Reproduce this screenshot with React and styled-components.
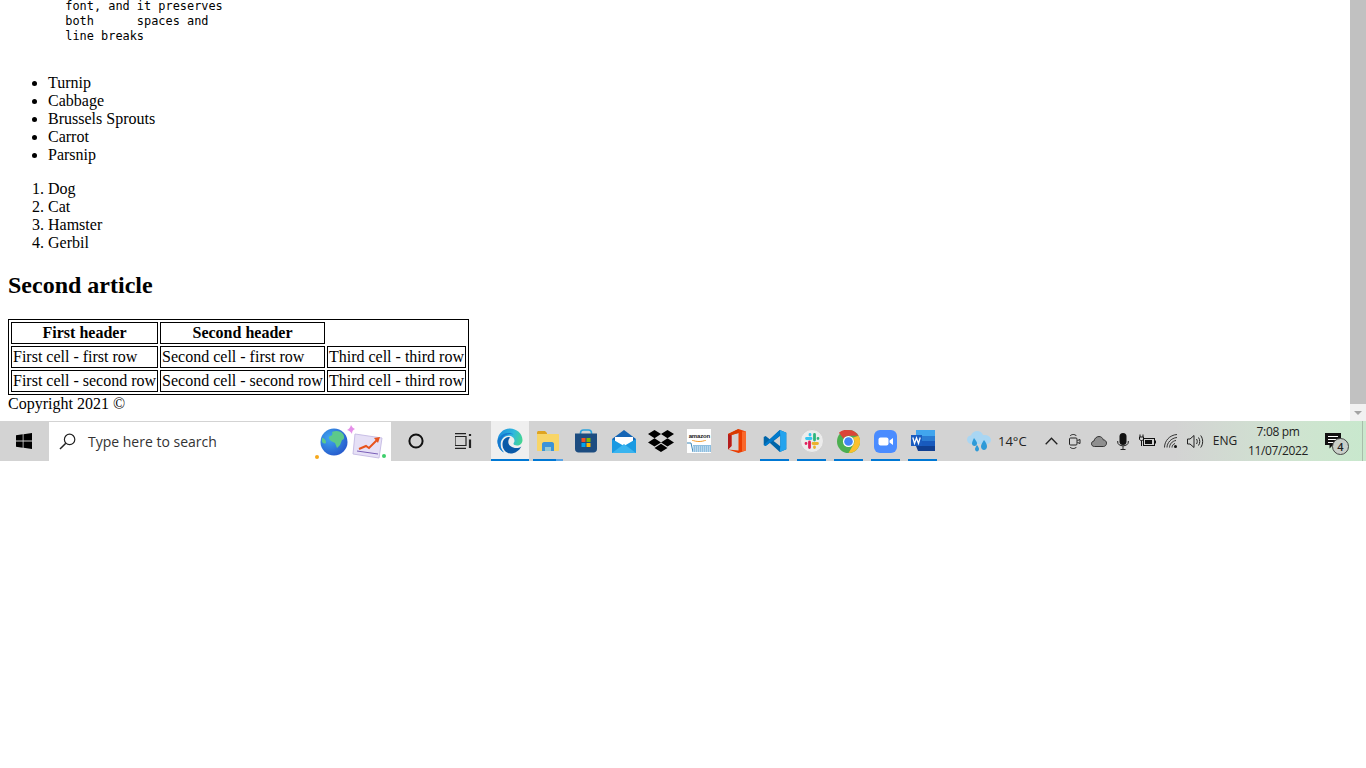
import React from "react";
import styled, { createGlobalStyle } from "styled-components";
import { FaDropbox } from "react-icons/fa";

const Global = createGlobalStyle`
	html, body {
		margin: 0;
		padding: 0;
		background: #fff;
		overflow: hidden;
	}
`;

const Screen = styled.div`
	display: flex;
	flex-direction: column;
	width: 1366px;
	height: 768px;
	background: #fff;
`;

const BrowserView = styled.div`
	display: flex;
	height: 421px;
	flex: none;
`;

// the page is scrolled to its end, so it hangs from the bottom of the view
const PageClip = styled.main`
	flex: 1;
	display: flex;
	flex-direction: column;
	justify-content: flex-end;
	overflow: hidden;
`;

const Page = styled.div`
	padding: 0 8px 8px;
	font-family: "Liberation Serif", "Times New Roman", serif;
	font-size: 16px;
	line-height: 18px;
	color: #000;
`;

const Pre = styled.pre`
	margin: 0 0 15px;
	font-family: "DejaVu Sans Mono", "Liberation Mono", monospace;
	font-size: 11.9px;
	line-height: 15px;
`;

const List = styled.ul`
	margin: 0 0 16px;
	padding-left: 40px;
`;

const Numbered = styled.ol`
	margin: 16px 0;
	padding-left: 40px;
`;

const Heading = styled.h2`
	margin: 20px 0;
	font-size: 24px;
	line-height: 27px;
	font-weight: bold;
`;

const Table = styled.table`
	border: 1px solid #000;
	border-collapse: separate;
	border-spacing: 2px;
	font-size: 16px;
	th, td {
		border: 1px solid #000;
		padding: 1px;
		line-height: 18px;
	}
	th.empty {
		border: none;
	}
`;

const Scrollbar = styled.div`
	width: 16px;
	flex: none;
	display: flex;
	flex-direction: column;
	background: #f1f1f1;
`;

const Thumb = styled.div`
	height: 404px;
	background: #c1c1c1;
`;

const ArrowBox = styled.div`
	flex: 1;
	display: flex;
	align-items: center;
	justify-content: center;
`;

const DownArrow = styled.div`
	width: 0;
	height: 0;
	border-left: 4px solid transparent;
	border-right: 4px solid transparent;
	border-top: 4px solid #a3a3a3;
`;

const Taskbar = styled.footer`
	display: flex;
	align-items: stretch;
	height: 40px;
	flex: none;
	background: linear-gradient(90deg, #d3d3d3 0%, #d3d3d3 86%, #cfe4d0 95%, #c8e8cd 100%);
	font-family: "Open Sans", "Noto Sans", sans-serif;
	color: #222;
`;

const Tile = styled.div`
	position: relative;
	display: flex;
	align-items: center;
	justify-content: center;
	flex: none;
	width: ${(p) => p.$w}px;
	background: ${(p) => (p.$active ? "#efefef" : "transparent")};
`;

// running app marker along the bottom of a tile
const Running = styled.span`
	position: absolute;
	left: ${(p) => p.$inset}px;
	right: ${(p) => p.$inset}px;
	bottom: 0;
	height: 2px;
	background: ${(p) => p.$split
		? "linear-gradient(90deg, #0078d4 78%, #5aa5e6 78%)"
		: "#0078d4"};
`;

const SearchBox = styled.div`
	display: flex;
	align-items: center;
	flex: none;
	width: 342px;
	margin: 1px 1px 0 1px;
	padding: 0 3px 0 10px;
	box-sizing: border-box;
	background: #fff;
`;

const SearchText = styled.span`
	margin-left: 12px;
	flex: 1;
	font-size: 14px;
	color: #333;
`;

const Apps = styled.div`
	display: flex;
	margin-left: 3px;
`;

const Tray = styled.div`
	display: flex;
	margin-left: auto;
`;

const Weather = styled.div`
	display: flex;
	align-items: center;
	width: 72px;
	flex: none;
	font-size: 13px;
	gap: 7px;
`;

const TrayText = styled.span`
	font-size: ${(p) => p.$size || 12}px;
	line-height: 16px;
	text-align: center;
	white-space: nowrap;
`;

const Clock = styled.div`
	display: flex;
	flex-direction: column;
	align-items: center;
	justify-content: center;
	width: 70px;
	flex: none;
	font-size: 12px;
	line-height: 19px;
	letter-spacing: -0.35px;
`;

const Badge = styled.span`
	position: absolute;
	left: 19px;
	top: 17px;
	width: 15px;
	height: 15px;
	border: 1px solid #444;
	border-radius: 50%;
	background: #c9cfc9;
	font-size: 11px;
	line-height: 15px;
	text-align: center;
	font-weight: 600;
	color: #222;
`;

const ShowDesktop = styled.div`
	flex: none;
	width: 3px;
	margin-left: 9px;
	border-left: 1px solid #a9bdab;
`;

const WindowsLogo = () => (
	<svg width="16" height="16" viewBox="0 0 16 16">
		<path fill="#000" d="M0 2.3 6.7 1.3V7.6H0zM7.5 1.2 16 0V7.6H7.5zM0 8.4H6.7V14.7L0 13.7zM7.5 8.4H16V16L7.5 14.8z" />
	</svg>
);

const Magnifier = () => (
	<svg width="17" height="17" viewBox="0 0 17 17" fill="none" stroke="#222" strokeWidth="1.2">
		<circle cx="10.6" cy="6.4" r="5.2" />
		<path d="M6.8 10.2 1 16" strokeWidth="1.5" />
	</svg>
);

const SearchArt = () => (
	<svg width="73" height="36" viewBox="-3 0 73 36">
		<defs>
			<radialGradient id="globe" cx="0.35" cy="0.35" r="0.8">
				<stop offset="0" stopColor="#3fa7f0" />
				<stop offset="1" stopColor="#2350c8" />
			</radialGradient>
		</defs>
		<path fill="#e6e0f6" stroke="#c9bfe6" d="M37 10 64 14 61 34 35 30z" />
		<path fill="none" stroke="#7a5fb8" strokeWidth="1" d="M39 27 60 30" />
		<path fill="none" stroke="#e8541e" strokeWidth="2" d="M41 25 48 22 51 24 60 15" />
		<path fill="#e8541e" d="M56 14 62 13 60 19z" />
		<circle cx="16" cy="18" r="13.5" fill="url(#globe)" />
		<path fill="#5cc98a" d="M14 8c4-2 9-1 11 2 2 3 1 6-1 6l-2 5-3 3-2-5-4-2c-2-2-3-4-1-5 2 0 3-2 2-4zM4 14c2 0 4 2 4 4s-2 2-4 0z" />
		<path fill="#e58ee8" d="M33 1c1 2 2 3 4 4-2 1-3 2-3 5-1-2-2-3-5-4 2-1 3-2 4-5z" />
		<circle cx="-1" cy="33" r="2" fill="#f6a81c" />
		<circle cx="66" cy="32" r="2" fill="#3ecf6c" />
	</svg>
);

const CortanaRing = () => (
	<svg width="16" height="16" viewBox="0 0 16 16">
		<circle cx="8" cy="8" r="6.6" fill="none" stroke="#111" strokeWidth="2" />
	</svg>
);

const TaskView = () => (
	<svg width="18" height="16" viewBox="0 0 18 16" fill="none" stroke="#222" strokeWidth="1.2">
		<path d="M0 .6H11M0 15.4H11M0 12.5V3.5H11V12.5H0" />
		<path d="M15 1V3M15 6.5V15" strokeWidth="2.2" />
	</svg>
);

const EdgeIcon = () => (
	<svg width="26" height="26" viewBox="0 0 26 26">
		<defs>
			<linearGradient id="edgeTop" x1="0" y1="0.3" x2="1" y2="0.6">
				<stop offset="0" stopColor="#1c8fdc" />
				<stop offset="0.55" stopColor="#2fb8de" />
				<stop offset="1" stopColor="#46d98a" />
			</linearGradient>
		</defs>
		<path fill="url(#edgeTop)" d="M13 .5C19.5.5 25.5 5.5 25.5 12c0 3.5-2.5 5.5-5.5 5.5-2 0-3.5-.7-3.5-1.7 0-1 1-1.3 1-3 0-3-3-5-6-5-4.5 0-8 4-8 9 0 3 1.2 5.8 3.5 7.6C2.500 22 .5 17.500.5 13 .5 6 6 .5 13 .5z" />
		<path fill="#1679cf" d="M3 9C5 6.500 8 5 11.500 5c2 0 3.500.5 5 1.500-1-.3-2-.5-3-.5C8 6 3.500 10.500 3.500 16c0 3.500 1.500 6.500 3.500 8.500C2.500 22 .5 17.500.5 13c0-1.500 1-3 2.500-4z" />
		<path fill="#0b5aa8" d="M11.500 9c-3.500.3-6 3.300-6 7.500 0 5 3.800 9 8 9 4.500 0 8.800-2.700 10.800-7-1.300 1-3 1.500-5 1.500-4 0-8-2.500-8-6 0-2 .7-3.500 2-4.500-.6-.3-1.200-.5-1.800-.5z" />
	</svg>
);

const FolderIcon = () => (
	<svg width="24" height="22" viewBox="0 0 24 22">
		<path fill="#dfa420" d="M1 4V2.500C1 1.700 1.700 1 2.500 1H9l2 2v2H1z" />
		<path fill="#f8d567" d="M1 4H22c.6 0 1 .4 1 1v15c0 .6-.4 1-1 1H2c-.6 0-1-.4-1-1z" />
		<path fill="#3b93d8" d="M6 14c0-1 .8-2 2-2h8c1.200 0 2 1 2 2v7h-3v-4H9v4H6z" />
		<path fill="#7cc4f0" d="M9 17h6v4H9z" opacity="0.8" />
	</svg>
);

const StoreIcon = () => (
	<svg width="24" height="24" viewBox="0 0 24 24">
		<path fill="none" stroke="#2aa3dd" strokeWidth="1.6" d="M6.500 6V4c0-1.700 1.300-3 3-3h5c1.700 0 3 1.300 3 3v2" />
		<path fill="#1c4c80" d="M1 4.500H23V20c0 2-1.500 3.500-3.500 3.500H4.500C2.500 23.500 1 22 1 20z" />
		<path fill="#f25022" d="M7.500 9H11.500V13H7.500z" />
		<path fill="#7fba00" d="M12.500 9H16.500V13H12.500z" />
		<path fill="#00a4ef" d="M7.500 14H11.500V18H7.500z" />
		<path fill="#ffb900" d="M12.500 14H16.500V18H12.500z" />
	</svg>
);

const MailIcon = () => (
	<svg width="24" height="23" viewBox="0 0 24 23">
		<path fill="#1565b5" d="M12 0 24 9V12H0V9z" />
		<path fill="#fff" d="M3 7H21V15H3z" />
		<path fill="#1a9ae2" d="M0 9 12 16 24 9V23H0z" />
		<path fill="#39b4ef" d="M0 23 12 14 24 23z" />
	</svg>
);

const AmazonTile = styled.div`
	display: flex;
	flex-direction: column;
	align-items: center;
	width: 24px;
	height: 24px;
	background: #fff;
	overflow: hidden;
`;

const AmazonWord = styled.span`
	font-family: "Liberation Sans", Arial, sans-serif;
	font-size: 6px;
	font-weight: bold;
	line-height: 8px;
	margin-top: 3px;
	letter-spacing: -0.2px;
	color: #222;
`;

const AmazonCart = () => (
	<svg width="24" height="13" viewBox="0 0 24 13">
		<path fill="none" stroke="#f19b2c" strokeWidth="1" d="M5 0c4 2 10 2 14 0" />
		<path fill="none" stroke="#3a86b8" strokeWidth="1" d="M0 3H4L6 12" />
		<path fill="#8fbfe0" d="M6 5H24V12H6z" />
		<path fill="none" stroke="#fff" strokeWidth="0.8" strokeDasharray="1 1" d="M6 7H24M6 9H24M6 11H24" />
	</svg>
);

const OfficeIcon = () => (
	<svg width="20" height="24" viewBox="0 0 20 24">
		<path fill="#eb3c00" d="M11.500 0 19 2.500V21.500L11.500 24 1 20.500 11.500 21.500V4L4.500 6V17L1 20.500V5z" />
		<path fill="#b51c1c" d="M1 5 4.500 6V17L1 20.500z" />
		<path fill="#d83b01" d="M11.500 0 1 5 4.500 6 11.500 4z" />
		<path fill="#ff7a3d" d="M15 2.500 19 2.500V21.500L15 22.500z" opacity="0.7" />
	</svg>
);

const VsCodeIcon = () => (
	<svg width="24" height="24" viewBox="0 0 100 100">
		<path fill="#0065a9" d="M70 4 28 43 11 29 3 33V67L11 71 28 57 70 96 97 84V16zM72 28V72L44 50z" fillRule="evenodd" />
		<path fill="#23a3ee" d="M70 4 97 16V84L70 96 72 72V28z" />
		<path fill="#007acc" d="M3 67 70 4V28L11 71z" />
	</svg>
);

const SlackIcon = () => (
	<svg width="24" height="24" viewBox="0 0 24 24">
		<circle cx="12" cy="12" r="11.500" fill="#ececec" stroke="#d0d0d0" />
		<g strokeWidth="2.800" strokeLinecap="round">
			<path stroke="#36c5f0" d="M6.500 9.500H11M10 5.500V6" />
			<path stroke="#2eb67d" d="M14.500 5.500V11M18 9.500H18" />
			<path stroke="#ecb22e" d="M13 14.500H17.500M14.500 18.500V18" />
			<path stroke="#e01e5a" d="M9.500 13V18.500M6 14.500H6" />
		</g>
	</svg>
);

const ChromeIcon = () => (
	<svg width="23" height="23" viewBox="0 0 24 24">
		<circle cx="12" cy="12" r="12" fill="#4caf50" />
		<path fill="#db4437" d="M12 0A12 12 0 0 1 22.400 6H12A6 6 0 0 0 6.800 9L2 2.800A12 12 0 0 1 12 0z" />
		<path fill="#fbc02d" d="M22.400 6A12 12 0 0 1 12 24L17.200 15A6 6 0 0 0 16.500 8z" />
		<circle cx="12" cy="12" r="5.800" fill="#fff" />
		<circle cx="12" cy="12" r="4.500" fill="#4285f4" />
	</svg>
);

const ZoomIcon = () => (
	<svg width="23" height="23" viewBox="0 0 23 23">
		<rect width="23" height="23" rx="6" fill="#4a8cff" />
		<rect x="4.500" y="7.500" width="10" height="8" rx="2" fill="#fff" />
		<path fill="#fff" d="M15.500 10.500 19 8V15L15.500 12.500z" />
	</svg>
);

const WordIcon = () => (
	<svg width="24" height="22" viewBox="0 0 24 22">
		<path fill="#41a5ee" d="M5 0H24V6H5z" />
		<path fill="#2b7cd3" d="M5 6H24V11H5z" />
		<path fill="#185abd" d="M5 11H24V16H5z" />
		<path fill="#103f91" d="M5 16H24V21H7z" />
		<rect y="5" width="11" height="11" fill="#1a5cc0" />
		<path fill="none" stroke="#fff" strokeWidth="1.300" d="M1.800 7.500 3.500 13.500 5.500 8 7.500 13.500 9.200 7.500" />
	</svg>
);

const WeatherIcon = () => (
	<svg width="24" height="24" viewBox="0 0 24 24">
		<path fill="#a9d6f3" d="M5 15C2 15 0 13 0 10.500 0 8 2 6.500 4 6.500 5 3.500 7.500 2 10 2 13 2 15 3.500 16 6 20 5.500 24 7.500 24 11 24 13.500 22 15 19 15z" />
		<path fill="#2d9ad8" d="M7 9C9 11.500 10 13 10 14.500 10 16 9 17 7.500 17 6 17 5 16 5 14.500 5 13 6 11 7 9zM17 11C19 13.500 20 15.500 20 17.500 20 19.500 18.500 21 17 21 15.500 21 14 19.500 14 17.500 14 15.500 15.500 13.500 17 11zM10 16C11.500 18 12 19 12 20 12 21.500 11 22.500 10 22.500 9 22.500 8 21.500 8 20 8 19 9 17.500 10 16z" />
	</svg>
);

const Chevron = () => (
	<svg width="13" height="8" viewBox="0 0 13 8" fill="none" stroke="#222" strokeWidth="1.300">
		<path d="M.7 7.300 6.500 1.200 12.300 7.300" />
	</svg>
);

const MeetIcon = () => (
	<svg width="12" height="17" viewBox="0 0 12 17" fill="none" stroke="#222" strokeWidth="1">
		<path d="M1 3C2.500 1 6 1 7.500 3M1 14C2.500 16 6 16 7.500 14" />
		<rect x=".5" y="5" width="7.500" height="7" rx="1" />
		<path d="M8.500 7.500 11 6.500V10.500L8.500 9.500" />
	</svg>
);

const CloudIcon = () => (
	<svg width="16" height="11" viewBox="0 0 16 11">
		<path fill="#8f8f8f" stroke="#333" d="M3.500 10.500C1.500 10.500.5 9.200.5 7.800.5 6.300 1.500 5.200 3 5 3.500 2.500 5.500.5 8 .5c2 0 3.700 1.300 4.200 3.300 1.800.1 3.300 1.500 3.300 3.300 0 1.900-1.300 3.400-3.200 3.400z" />
	</svg>
);

const MicIcon = () => (
	<svg width="12" height="17" viewBox="0 0 12 17">
		<rect x="2.500" width="7" height="12" rx="3.500" fill="#111" />
		<path fill="none" stroke="#222" d="M.7 8V9C.7 11.500 3 12.800 6 12.800S11.300 11.500 11.300 9V8M6 13V16M3.500 16.500H8.500" />
	</svg>
);

const BatteryIcon = () => (
	<svg width="17" height="14" viewBox="0 0 17 14" fill="none" stroke="#111">
		<rect x="4.500" y="4.500" width="11" height="7" />
		<path fill="#111" stroke="none" d="M6 6H13V10H6zM16 6.500H17V9.500H16z" />
		<path d="M1 .5V3M4 .5V3M.5 3H4.500V5C4.500 6 3.500 6.500 2.500 6.500S.5 6 .5 5zM2.500 6.500V12" />
	</svg>
);

const WifiIcon = () => (
	<svg width="14" height="14" viewBox="0 0 14 14" fill="none" stroke="#333" strokeWidth="1">
		<path d="M.5 13.500C.5 7 5.500 1 13 .5" />
		<path d="M3 13.500C3 9 7 4 13 3.500" />
		<path d="M5.500 13.500C5.500 10.500 8 7 12 6.500" />
		<path d="M8 13.500C8 12 9 10 11 9.500" />
		<circle cx="11.500" cy="12.500" r="1.500" fill="#111" stroke="none" />
	</svg>
);

const SpeakerIcon = () => (
	<svg width="17" height="15" viewBox="0 0 17 15" fill="none" stroke="#222" strokeWidth="1">
		<path d="M.5 5V10H3L7 13.500V1.500L3 5z" />
		<path d="M9.500 5C10.500 6.500 10.500 8.500 9.500 10M11.500 3.500C13.200 6 13.200 9 11.500 11.500M13.700 1.500C16.300 5 16.300 10 13.700 13.500" />
	</svg>
);

const NotifyIcon = () => (
	<svg width="16" height="16" viewBox="0 0 16 16">
		<path fill="#111" d="M0 0H16V12H8L4.500 15.500V12H0z" />
		<path stroke="#fff" strokeWidth="1" d="M3 3.500H13M3 6.500H13M3 9.500H9" />
	</svg>
);

const apps = [
	{ w: 38, icon: <EdgeIcon />, active: true, run: 0 },
	{ w: 37.85, icon: <FolderIcon />, split: true, run: 4 },
	{ w: 37.85, icon: <StoreIcon /> },
	{ w: 37.85, icon: <MailIcon /> },
	{ w: 37.85, icon: <FaDropbox size={26} color="#000" /> },
	{
		w: 37.85,
		icon: (
			<AmazonTile>
				<AmazonWord>amazon</AmazonWord>
				<AmazonCart />
			</AmazonTile>
		),
	},
	{ w: 37.85, icon: <OfficeIcon /> },
	{ w: 37, icon: <VsCodeIcon />, run: 4 },
	{ w: 37, icon: <SlackIcon />, run: 4 },
	{ w: 37, icon: <ChromeIcon />, run: 4 },
	{ w: 37, icon: <ZoomIcon />, run: 4 },
	{ w: 37, icon: <WordIcon />, run: 4 },
];

const trayIcons = [<Chevron />, <MeetIcon />, <CloudIcon />, <MicIcon />, <BatteryIcon />, <WifiIcon />, <SpeakerIcon />];

export default function App() {
	return (
		<Screen>
			<Global />
			<BrowserView>
				<PageClip>
					<Page>
						<Pre>{`        font, and it preserves
        both      spaces and
        line breaks

`}</Pre>
						<List>
							<li>Turnip</li>
							<li>Cabbage</li>
							<li>Brussels Sprouts</li>
							<li>Carrot</li>
							<li>Parsnip</li>
						</List>
						<Numbered>
							<li>Dog</li>
							<li>Cat</li>
							<li>Hamster</li>
							<li>Gerbil</li>
						</Numbered>
						<Heading>Second article</Heading>
						<Table>
							<thead>
								<tr>
									<th>First header</th>
									<th>Second header</th>
									<th className="empty"></th>
								</tr>
							</thead>
							<tbody>
								<tr>
									<td>First cell - first row</td>
									<td>Second cell - first row</td>
									<td>Third cell - third row</td>
								</tr>
								<tr>
									<td>First cell - second row</td>
									<td>Second cell - second row</td>
									<td>Third cell - third row</td>
								</tr>
							</tbody>
						</Table>
						<div>Copyright 2021 ©</div>
					</Page>
				</PageClip>
				<Scrollbar>
					<Thumb />
					<ArrowBox>
						<DownArrow />
					</ArrowBox>
				</Scrollbar>
			</BrowserView>
			<Taskbar>
				<Tile $w={48}>
					<WindowsLogo />
				</Tile>
				<SearchBox>
					<Magnifier />
					<SearchText>Type here to search</SearchText>
					<SearchArt />
				</SearchBox>
				<Tile $w={48}>
					<CortanaRing />
				</Tile>
				<Tile $w={48}>
					<TaskView />
				</Tile>
				<Apps>
					{apps.map((app, i) => (
						<Tile key={i} $w={app.w} $active={app.active}>
							{app.icon}
							{app.run !== undefined && <Running $inset={app.run} $split={app.split} />}
						</Tile>
					))}
				</Apps>
				<Tray>
					<Weather>
						<WeatherIcon />
						<span>14°C</span>
					</Weather>
					{trayIcons.map((icon, i) => (
						<Tile key={i} $w={24}>
							{icon}
						</Tile>
					))}
					<Tile $w={36}>
						<TrayText>ENG</TrayText>
					</Tile>
					<Clock>
						<span>7:08 pm</span>
						<span>11/07/2022</span>
					</Clock>
					<Tile $w={40}>
						<NotifyIcon />
						<Badge>4</Badge>
					</Tile>
					<ShowDesktop />
				</Tray>
			</Taskbar>
		</Screen>
	);
}
